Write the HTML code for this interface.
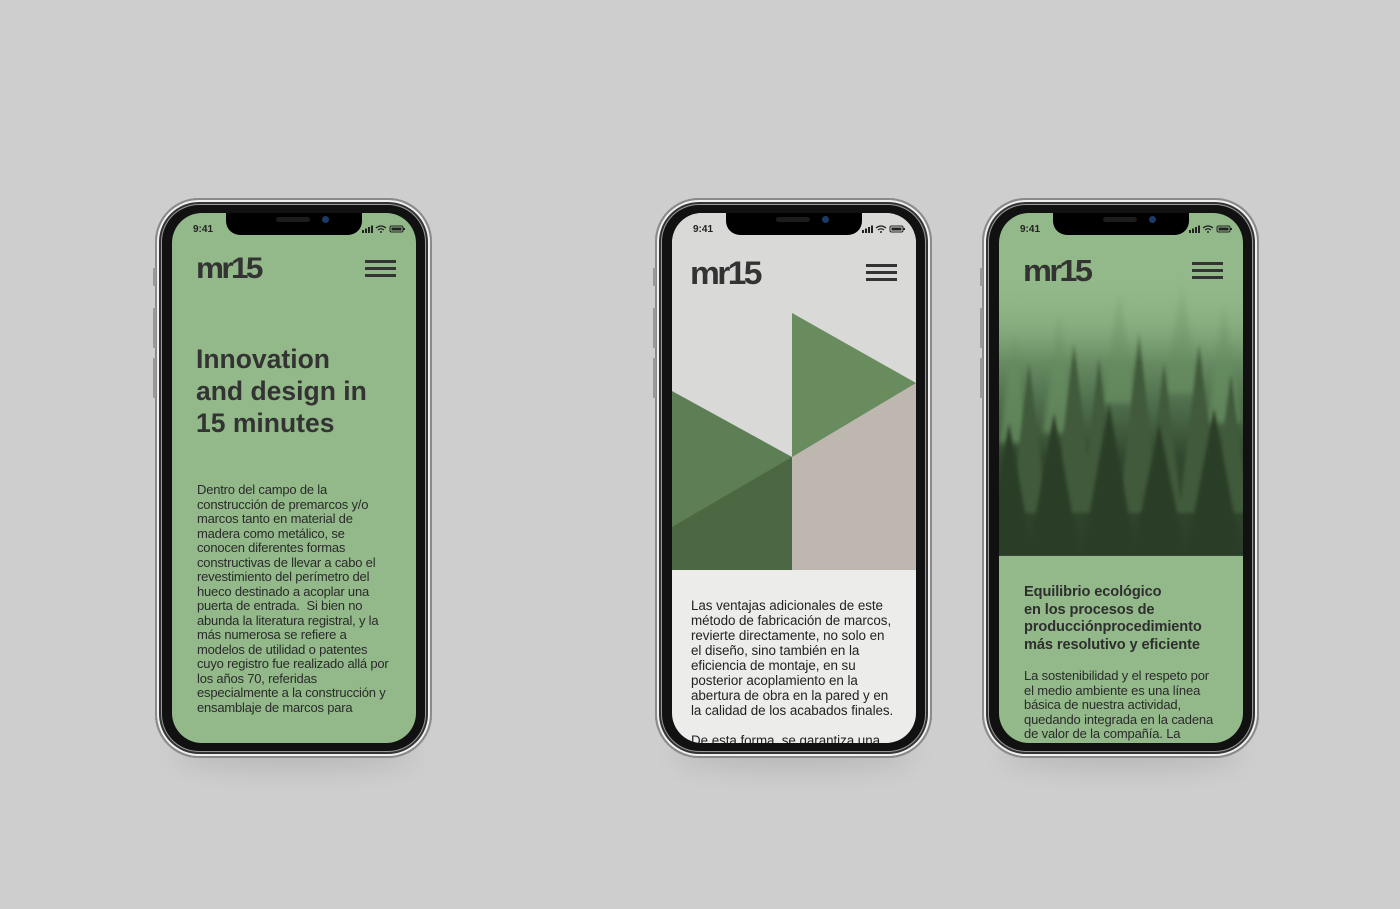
<!DOCTYPE html>
<html><head><meta charset="utf-8">
<style>
*{margin:0;padding:0;box-sizing:border-box}
body{width:1400px;height:909px;background:#cecece;position:relative;overflow:hidden;font-family:"Liberation Sans",sans-serif;color:#2b2b2b}
.shadow{position:absolute;height:30px;border-radius:50%;background:rgba(0,0,0,.10);filter:blur(12px)}
.phone{position:absolute;top:198px;width:277px;height:560px;border-radius:44px;background:#111;
 box-shadow:inset 0 0 0 2px #8a8a8a,inset 0 0 0 4px #f0f0f0,inset 0 0 0 6px #333,inset 0 0 0 7px #999}
.btn{position:absolute;left:-2px;width:3px;background:#999;border-radius:1px}
.screen{position:absolute;left:17px;top:15px;width:244px;height:530px;border-radius:30px;overflow:hidden;background:#93b98a}
.notch{position:absolute;left:54px;top:-2px;width:136px;height:24px;background:#000;border-radius:0 0 14px 14px}
.notch:before{content:"";position:absolute;left:50px;top:6px;width:34px;height:5px;border-radius:3px;background:#1c1c1c}
.notch:after{content:"";position:absolute;left:96px;top:5px;width:7px;height:7px;border-radius:50%;background:#1d3a66}
.time{position:absolute;left:21px;top:11px;font-size:10px;font-weight:bold;color:#222}
.stat{position:absolute;right:10px;top:12px;width:44px;height:8px}
.logo{position:absolute;font-weight:bold;font-size:30px;letter-spacing:-2.5px;color:#333;line-height:1;transform:scaleX(1.05);transform-origin:left}
.ham{position:absolute;width:31px;height:17px;border-top:3px solid #333;border-bottom:3px solid #333}
.ham:after{content:"";position:absolute;left:0;right:0;top:4px;height:3px;background:#333}
.t{position:absolute;white-space:nowrap}
</style></head><body>

<div class="shadow" style="left:175px;top:740px;width:240px"></div>
<div class="shadow" style="left:675px;top:740px;width:240px"></div>
<div class="shadow" style="left:1002px;top:740px;width:240px"></div>

<!-- Phone 1 -->
<div class="phone" style="left:155px">
 <div class="btn" style="top:70px;height:18px"></div><div class="btn" style="top:110px;height:40px"></div><div class="btn" style="top:160px;height:40px"></div>
 <div class="screen">
  <div class="notch"></div>
  <div class="time">9:41</div>
  <svg class="stat" viewBox="0 0 44 8"><rect x="0" y="5" width="2" height="3" fill="#222"/><rect x="3" y="3.5" width="2" height="4.5" fill="#222"/><rect x="6" y="2" width="2" height="6" fill="#222"/><rect x="9" y="0.5" width="2" height="7.5" fill="#222"/><path d="M14 3 Q19 -1 24 3 M16 5 Q19 2.5 22 5" stroke="#222" stroke-width="1.3" fill="none"/><circle cx="19" cy="7" r="1" fill="#222"/><rect x="28" y="1" width="13" height="6" rx="1.5" fill="none" stroke="#222"/><rect x="29.5" y="2.5" width="10" height="3" fill="#222"/><rect x="41.5" y="3" width="1.5" height="2" fill="#222"/></svg>
  <div class="logo" style="left:24px;top:41px">mr15</div>
  <div class="ham" style="left:193px;top:47px"></div>
  <div class="t" style="left:24px;top:130px;font-size:26.5px;line-height:32px;font-weight:bold;color:#333">Innovation<br>and design in<br>15 minutes</div>
  <div class="t" style="left:25px;top:270px;font-size:13px;line-height:14.5px;letter-spacing:-0.2px;color:#2a2a2a">Dentro del campo de la<br>construcción de premarcos y/o<br>marcos tanto en material de<br>madera como metálico, se<br>conocen diferentes formas<br>constructivas de llevar a cabo el<br>revestimiento del perímetro del<br>hueco destinado a acoplar una<br>puerta de entrada.&nbsp; Si bien no<br>abunda la literatura registral, y la<br>más numerosa se refiere a<br>modelos de utilidad o patentes<br>cuyo registro fue realizado allá por<br>los años 70, referidas<br>especialmente a la construcción y<br>ensamblaje de marcos para</div>
 </div>
</div>

<!-- Phone 2 -->
<div class="phone" style="left:655px">
 <div class="btn" style="top:70px;height:18px"></div><div class="btn" style="top:110px;height:40px"></div><div class="btn" style="top:160px;height:40px"></div>
 <div class="screen" style="background:#ececeb">
  <div style="position:absolute;left:0;top:0;width:244px;height:357px;background:#d9d9d8"></div>
  <svg style="position:absolute;left:0;top:0" width="244" height="357" viewBox="672 213 244 357">
   <polygon points="792,313 916,383 916,570 792,570 792,457" fill="#bdb7b0"/>
   <polygon points="792,313 916,383 792,457" fill="#698c5e"/>
   <polygon points="672,391 792,457 792,570 672,570" fill="#5e7f55"/>
   <polygon points="672,527 792,457 792,570 672,570" fill="#4b6842"/>
  </svg>
  <div class="notch"></div>
  <div class="time">9:41</div>
  <svg class="stat" viewBox="0 0 44 8"><rect x="0" y="5" width="2" height="3" fill="#222"/><rect x="3" y="3.5" width="2" height="4.5" fill="#222"/><rect x="6" y="2" width="2" height="6" fill="#222"/><rect x="9" y="0.5" width="2" height="7.5" fill="#222"/><path d="M14 3 Q19 -1 24 3 M16 5 Q19 2.5 22 5" stroke="#222" stroke-width="1.3" fill="none"/><circle cx="19" cy="7" r="1" fill="#222"/><rect x="28" y="1" width="13" height="6" rx="1.5" fill="none" stroke="#222"/><rect x="29.5" y="2.5" width="10" height="3" fill="#222"/><rect x="41.5" y="3" width="1.5" height="2" fill="#222"/></svg>
  <div class="logo" style="left:18px;top:44px;font-size:32px">mr15</div>
  <div class="ham" style="left:194px;top:51px"></div>
  <div class="t" style="left:19px;top:385px;font-size:13.4px;line-height:15px;letter-spacing:-0.05px;color:#222">Las ventajas adicionales de este<br>método de fabricación de marcos,<br>revierte directamente, no solo en<br>el diseño, sino también en la<br>eficiencia de montaje, en su<br>posterior acoplamiento en la<br>abertura de obra en la pared y en<br>la calidad de los acabados finales.<br><br>De esta forma, se garantiza una</div>
 </div>
</div>

<!-- Phone 3 -->
<div class="phone" style="left:982px">
 <div class="btn" style="top:70px;height:18px"></div><div class="btn" style="top:110px;height:40px"></div><div class="btn" style="top:160px;height:40px"></div>
 <div class="screen">
  <div style="position:absolute;left:0;top:60px;width:244px;height:282px;background:linear-gradient(#93b98a 0%,#7fa477 18%,#557752 42%,#33492f 65%,#2c3f2a 100%)"></div>
  <svg style="position:absolute;left:0;top:60px" width="244" height="282" viewBox="0 0 244 282">
   <defs><filter id="b1"><feGaussianBlur stdDeviation="3"/></filter><filter id="b2"><feGaussianBlur stdDeviation="1.5"/></filter>
   <linearGradient id="fog" x1="0" y1="0" x2="0" y2="1"><stop offset="0" stop-color="#93b98a" stop-opacity="1"/><stop offset="1" stop-color="#93b98a" stop-opacity="0"/></linearGradient></defs>
   <g fill="#668c60" filter="url(#b1)" opacity=".8">
    <polygon points="15,60 0,170 30,170"/><polygon points="60,40 44,160 76,160"/><polygon points="120,15 104,130 136,130"/><polygon points="183,5 166,120 200,120"/><polygon points="225,30 208,150 242,150"/>
   </g>
   <g fill="#3f5a3b" filter="url(#b2)">
    <polygon points="30,90 12,240 48,240"/><polygon points="75,70 55,240 95,240"/><polygon points="100,85 82,240 118,240"/><polygon points="140,60 120,240 160,240"/><polygon points="165,90 147,240 183,240"/><polygon points="200,70 180,240 220,240"/><polygon points="232,100 214,240 250,240"/>
   </g>
   <g fill="#2a3c28" filter="url(#b2)">
    <polygon points="10,150 -15,290 35,290"/><polygon points="55,140 28,290 82,290"/><polygon points="110,130 82,290 138,290"/><polygon points="160,150 132,290 188,290"/><polygon points="215,135 186,290 244,290"/>
   </g>
   <rect x="0" y="0" width="244" height="90" fill="url(#fog)"/>
  </svg>
  <div style="position:absolute;left:0;top:342px;width:244px;height:1px;background:#3a4a38"></div>
  <div class="notch"></div>
  <div class="time">9:41</div>
  <svg class="stat" viewBox="0 0 44 8"><rect x="0" y="5" width="2" height="3" fill="#222"/><rect x="3" y="3.5" width="2" height="4.5" fill="#222"/><rect x="6" y="2" width="2" height="6" fill="#222"/><rect x="9" y="0.5" width="2" height="7.5" fill="#222"/><path d="M14 3 Q19 -1 24 3 M16 5 Q19 2.5 22 5" stroke="#222" stroke-width="1.3" fill="none"/><circle cx="19" cy="7" r="1" fill="#222"/><rect x="28" y="1" width="13" height="6" rx="1.5" fill="none" stroke="#222"/><rect x="29.5" y="2.5" width="10" height="3" fill="#222"/><rect x="41.5" y="3" width="1.5" height="2" fill="#222"/></svg>
  <div class="logo" style="left:24px;top:42px;font-size:31px">mr15</div>
  <div class="ham" style="left:193px;top:49px"></div>
  <div class="t" style="left:25px;top:371px;font-size:14.6px;line-height:17.5px;font-weight:bold;letter-spacing:-0.1px;color:#2e2e2e">Equilibrio ecológico<br>en los procesos de<br>producciónprocedimiento<br>más resolutivo y eficiente</div>
  <div class="t" style="left:25px;top:456px;font-size:13px;line-height:14.5px;letter-spacing:-0.15px;color:#2a2a2a">La sostenibilidad y el respeto por<br>el medio ambiente es una línea<br>básica de nuestra actividad,<br>quedando integrada en la cadena<br>de valor de la compañía. La</div>
 </div>
</div>

</body></html>
